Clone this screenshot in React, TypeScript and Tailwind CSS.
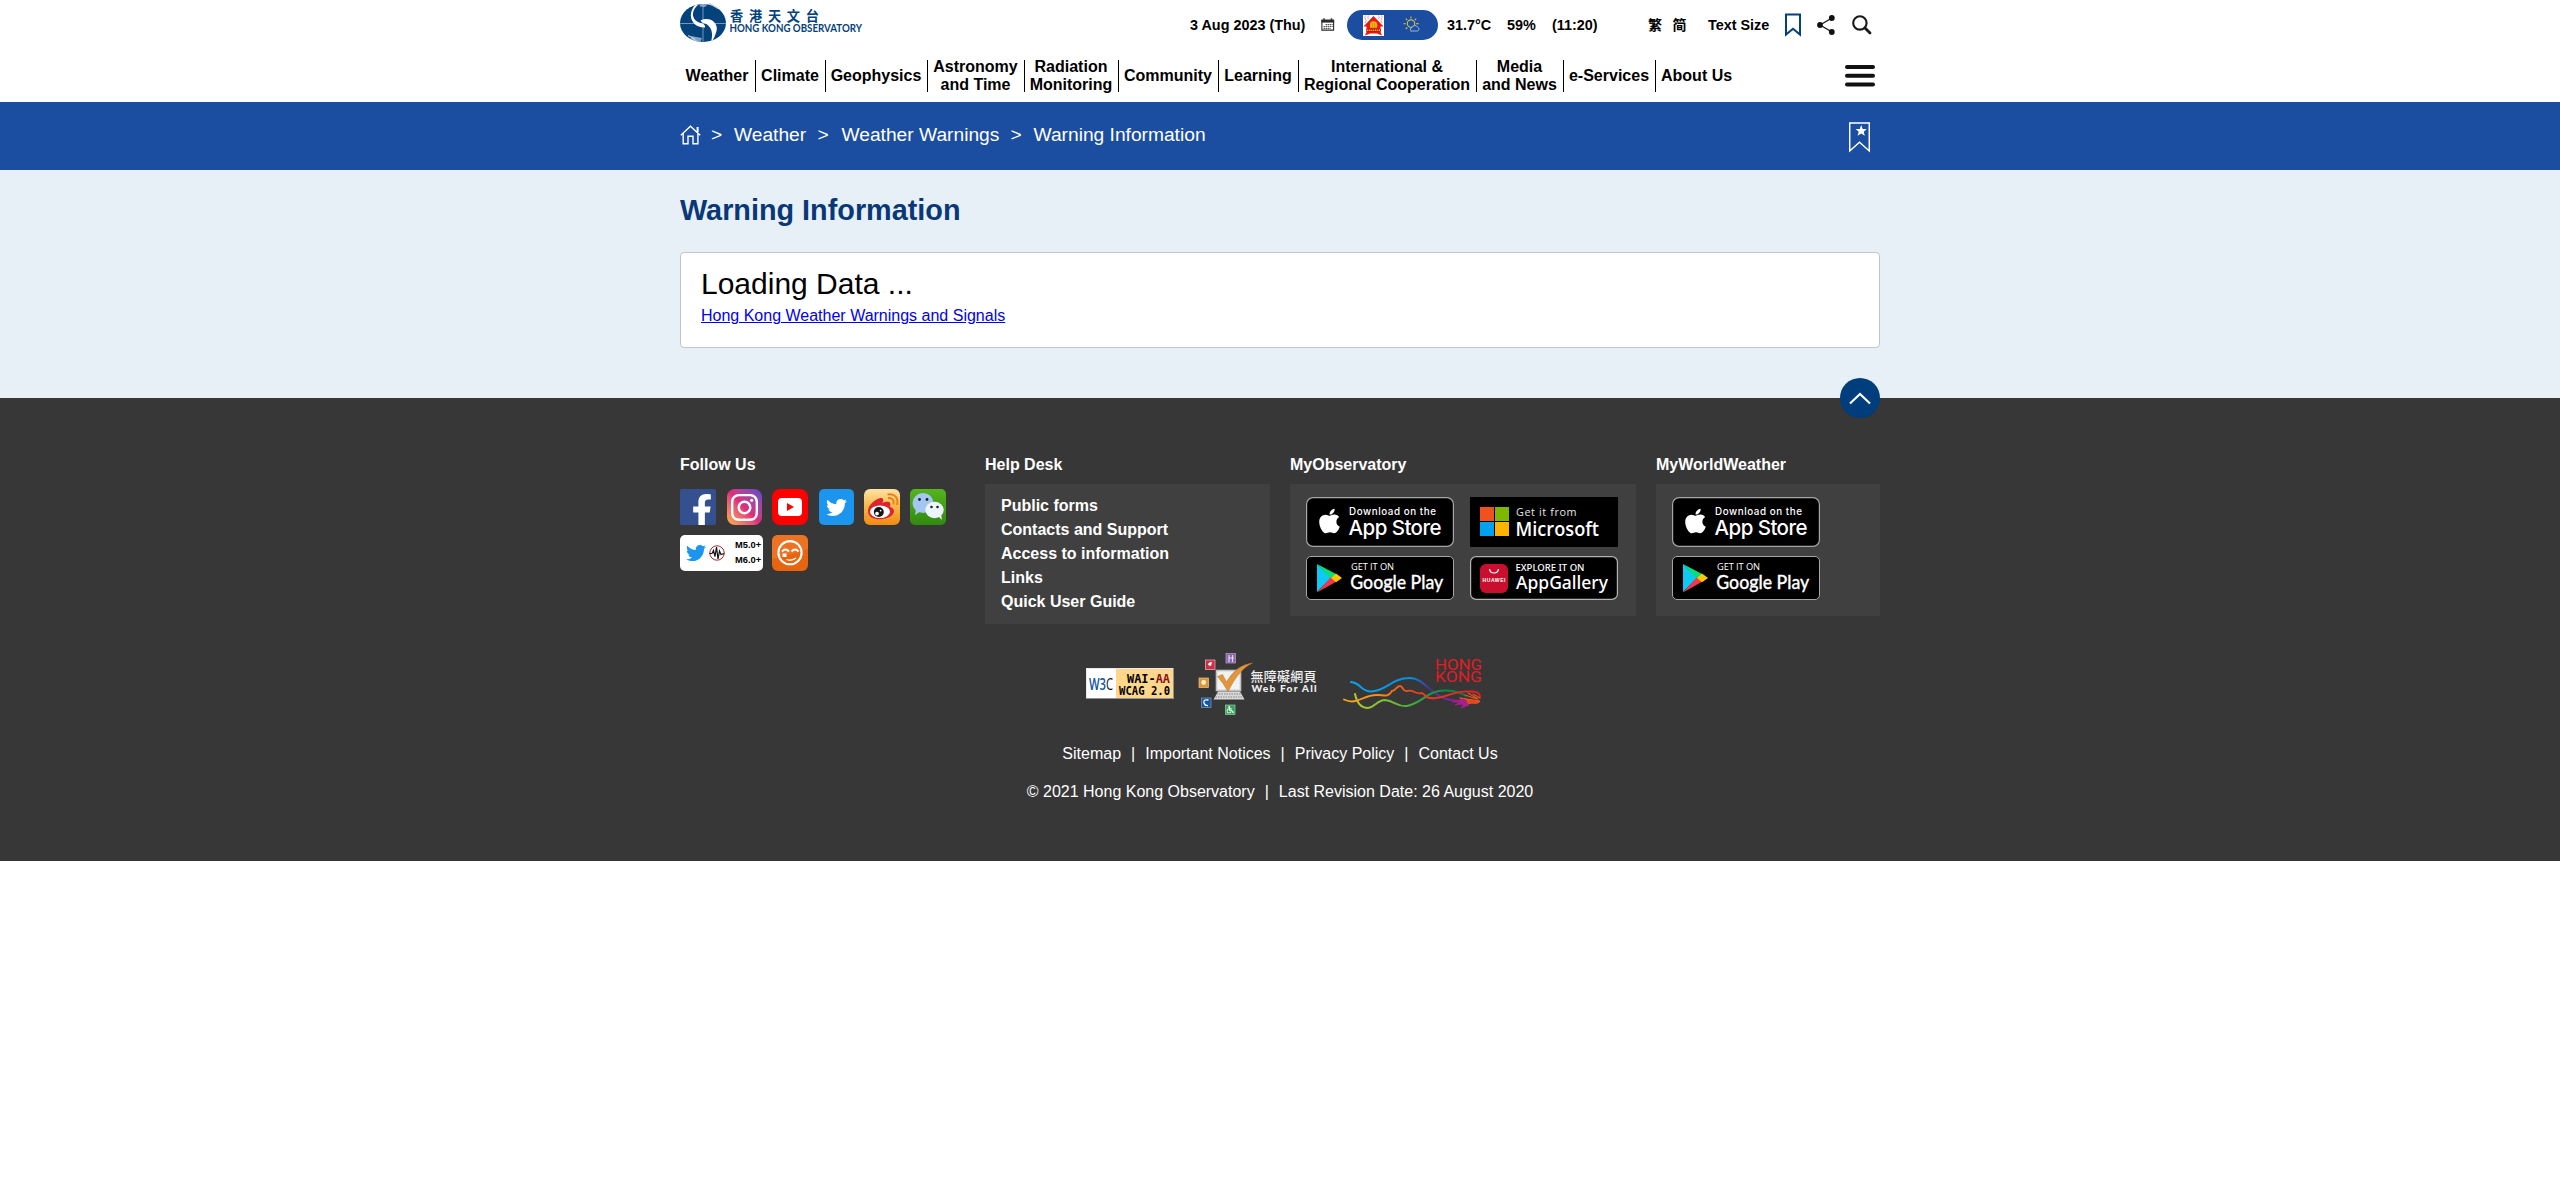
import React from "react";
import { FaFacebookF, FaInstagram, FaTwitter, FaApple, FaWheelchair } from "react-icons/fa";

const SANS = "Liberation Sans, Arial, sans-serif";
const CJK = "Noto Sans CJK TC, sans-serif";

function ObservatoryLogo() {
  return (
    <svg width="186" height="46" viewBox="0 0 186 46" className="block overflow-visible">
      <defs>
        <clipPath id="globe">
          <ellipse cx="23" cy="23" rx="23" ry="19" />
        </clipPath>
      </defs>
      <g clipPath="url(#globe)">
        <rect width="46" height="44" fill="#04427c" />
        <path d="M23 0V44M0 23.5H46" stroke="#7fa3c4" strokeWidth="0.9" />
        <path d="M11 4.500C12 3.500 15 4 19 4C10 11 11 21 22 23.500C24 24 25.500 25.500 25 27.500C12 28 5 14 17 3" fill="#fff" />
        <path d="M20.500 20.500C31 15.500 38.500 24 36.500 31C35 37 33 40 30.500 43C33.500 35 33 25 22 22.500Z" fill="#fff" />
        <path d="M19 3L29 3L25 7L20 6.500ZM11 36L22 38L20 43L10 42Z" fill="#b4c9dd" opacity="0.7" />
      </g>
      <path d="M29 3.500L35 6.500M32 5L38 8.500M12 38L18 42M8 35.500L15 39" stroke="#b4c9dd" strokeWidth="1.100" />
      <text x="50" y="21.200" textLength="89" fontFamily={CJK} fontWeight="700" fontSize="13.200" fill="#04427c">香港天文台</text>
      <text x="49.500" y="32.300" textLength="132.500" lengthAdjust="spacingAndGlyphs" fontFamily="Lato, sans-serif" fontWeight="700" fontSize="10.400" fill="#04427c">HONG KONG OBSERVATORY</text>
    </svg>
  );
}

function CalendarIcon() {
  return (
    <svg width="14" height="14" viewBox="0 0 14 14">
      <path d="M0.9 2.2H12.6V12.1H0.9Z" fill="#fff" stroke="#2b2b2b" strokeWidth="1.1" />
      <path d="M0.4 1.7H13.1V4.6H0.4Z" fill="#2b2b2b" />
      <path d="M3 0.3V2.6M10.5 0.3V2.6" stroke="#2b2b2b" strokeWidth="1.4" />
      <path d="M4.6 6.6H11.6M2.6 8.5H11.6M2.6 10.4H9.6" stroke="#444" strokeWidth="1.1" strokeDasharray="1.3 0.7" />
    </svg>
  );
}

function HotWarningIcon() {
  return (
    <svg width="21" height="21" viewBox="0 0 21 21">
      <rect width="21" height="21" fill="#fff" />
      <path d="M2.5 0.5Q1 2.5 2.5 4T2 8M5.5 0.5Q4 2.5 5.5 4M15.5 0.5Q17 2.5 15.5 4M18.5 0.5Q20 2.5 18.5 4T19 8" stroke="#f58f8f" strokeWidth="0.9" fill="none" />
      <path d="M10.5 1L20.5 11.5H17.5V17L19 20.5L14 18.5H7L2 20.5L3.5 17V11.5H0.5Z" fill="#f01414" />
      <path d="M7 12.8V9.2Q7.2 6.2 10.2 6.2Q14 6.2 14.2 9.4V12.8Z" fill="#f2b90c" />
      <path d="M9.3 8V12M11.6 8V12" stroke="#c9820c" strokeWidth="0.7" />
      <path d="M3.2 15.2H17.8" stroke="#a31010" strokeWidth="2.6" />
      <path d="M3.6 15.3H17.4" stroke="#f2b90c" strokeWidth="1.5" strokeDasharray="1.4 0.6" />
    </svg>
  );
}

function SunCloudIcon() {
  return (
    <svg width="18" height="18" viewBox="0 0 18 18" fill="none">
      <circle cx="8" cy="7.6" r="3.7" stroke="#d3bd52" strokeWidth="1.1" />
      <path d="M8 0.5V2.5M8 13.2V15.6M0.5 7.8H2.8M13.3 7.6H15.6M2.8 2.6L4.2 4M13.2 2.6L11.8 4M2.8 13L4.2 11.5" stroke="#d3bd52" strokeWidth="1.1" />
      <path d="M8.6 15H14.7A2 2 0 0 0 14.6 11.2A2.9 2.9 0 0 0 9.2 11.5A1.8 1.8 0 0 0 8.6 15Z" fill="#1b4ea0" stroke="#9cb5de" strokeWidth="1" />
    </svg>
  );
}

function TopBar() {
  return (
    <div className="flex h-[50px] items-center text-[14.4px] font-bold whitespace-nowrap text-black">
      <div className="h-[50px] w-[510px]"><ObservatoryLogo /></div>
      <span className="w-[131px] pt-0.5">3 Aug 2023 (Thu)</span>
      <span className="w-[26px]"><CalendarIcon /></span>
      <div className="mr-[9px] flex h-[30px] w-[91px] items-center rounded-full bg-[#1b4ea0] pl-4">
        <HotWarningIcon />
        <span className="ml-[19px]"><SunCloudIcon /></span>
      </div>
      <span className="w-[60px] pt-0.5">31.7°C</span>
      <span className="w-[45px] pt-0.5">59%</span>
      <span className="w-[96px] pt-0.5">(11:20)</span>
      <span className="w-[24.5px] pb-0.5 font-['Noto_Sans_CJK_TC',sans-serif] text-sm leading-5">繁</span>
      <span className="w-[35.5px] pb-0.5 font-['Noto_Sans_CJK_SC',sans-serif] text-sm leading-5">简</span>
      <span className="w-[77px] pt-0.5">Text Size</span>
      <svg className="mr-4" width="16" height="24" viewBox="0 0 16 24" fill="none">
        <path d="M1 1.5H15V21.6L8 15.8L1 21.6Z" stroke="#04427c" strokeWidth="2" />
      </svg>
      <svg className="mr-[17px]" width="18" height="20" viewBox="0 0 18 20">
        <path d="M15 3L3 10L15 17" stroke="#111" strokeWidth="1.2" fill="none" />
        <circle cx="14.8" cy="3" r="2.9" fill="#111" />
        <circle cx="3" cy="10" r="2.9" fill="#111" />
        <circle cx="14.8" cy="17" r="2.9" fill="#111" />
      </svg>
      <svg width="20" height="20" viewBox="0 0 20 20" fill="none" stroke="#1a1a1a">
        <circle cx="7.9" cy="7.9" r="6.7" strokeWidth="2.1" />
        <path d="M13 13L18 18" strokeWidth="2.8" strokeLinecap="round" />
      </svg>
    </div>
  );
}

const NAV: { lines: string[]; width: string }[] = [
  { lines: ["Weather"], width: "w-[76px]" },
  { lines: ["Climate"], width: "w-[70px]" },
  { lines: ["Geophysics"], width: "w-[102px]" },
  { lines: ["Astronomy", "and Time"], width: "w-[97px]" },
  { lines: ["Radiation", "Monitoring"], width: "w-[94px]" },
  { lines: ["Community"], width: "w-[100px]" },
  { lines: ["Learning"], width: "w-[80px]" },
  { lines: ["International &", "Regional Cooperation"], width: "w-[178px]" },
  { lines: ["Media", "and News"], width: "w-[87px]" },
  { lines: ["e-Services"], width: "w-[92px]" },
];

function NavBar() {
  return (
    <nav className="flex h-[52px] items-center text-base leading-[18px] font-bold whitespace-nowrap text-black">
      {NAV.map((item) => (
        <div key={item.lines[0]} className={`${item.width} flex h-8 flex-col items-center justify-center border-r border-black pr-px`}>
          {item.lines.map((l) => <span key={l}>{l}</span>)}
        </div>
      ))}
      <span className="pl-[5px]">About Us</span>
      <svg className="mr-[5px] ml-auto" width="30" height="22" viewBox="0 0 30 22">
        <path d="M2 2H28M2 10.7H28M2 19.4H28" stroke="#111" strokeWidth="4" strokeLinecap="round" />
      </svg>
    </nav>
  );
}

function Breadcrumb() {
  return (
    <div className="h-[68px] bg-[#1b4ea0] text-[19.2px] whitespace-nowrap text-white">
      <div className="mx-auto flex h-[67px] w-[1200px] items-center">
        <svg className="mr-[10px] mb-0.5" width="21" height="20" viewBox="0 0 21 20" fill="none" stroke="#fff" strokeWidth="1.4">
          <path d="M0.8 10.3L10.5 1.2L20.2 10.3M3.2 8.5V18.8H8V11.2H13V18.8H17.9V8.5" />
          <path d="M17.6 2V7" strokeWidth="2" />
        </svg>
        <span className="w-[23px]">&gt;</span>
        <span className="w-[83.500px]">Weather</span>
        <span className="w-[24px]">&gt;</span>
        <span className="w-[169px]">Weather Warnings</span>
        <span className="w-[23px]">&gt;</span>
        <span>Warning Information</span>
        <svg className="mt-1 mr-[10px] ml-auto" width="21" height="31" viewBox="0 0 21 31">
          <path d="M0.7 0.9H20.3V29L10.5 20.3L0.7 29Z" fill="none" stroke="#fff" strokeWidth="1.5" />
          <path d="M12.2 3L13.7 6.9L17.8 7.1L14.7 9.7L15.8 13.8L12.2 11.5L8.6 13.8L9.7 9.7L6.6 7.1L10.7 6.9Z" fill="#fff" />
        </svg>
      </div>
    </div>
  );
}

function FollowUs() {
  return (
    <div className="flex w-[285px] flex-wrap gap-y-[10px]">
      <div className="mr-[11px] size-9 overflow-hidden rounded-[2px] bg-[#35508f] pt-[5px] pl-[11px]">
        <FaFacebookF color="#fff" className="h-[33px] w-[22px]" />
      </div>
      <div className="mr-[10px] flex h-9 w-[35px] items-center justify-center rounded-lg bg-linear-to-tr from-[#fbb040] via-[#dd2a7b] to-[#5a41cf]">
        <FaInstagram size={31} color="#fff" />
      </div>
      <div className="mr-[11px] flex size-9 items-center justify-center rounded-lg bg-[#fe0000]">
        <svg width="24" height="18" viewBox="0 0 24 18">
          <rect width="24" height="18" rx="4" fill="#fff" />
          <path d="M9 5L16 9L9 13Z" fill="#fe0000" />
        </svg>
      </div>
      <div className="mr-[10px] flex h-9 w-[35px] items-center justify-center rounded-[5px] bg-[#1b95ee]">
        <FaTwitter size={21} color="#fff" />
      </div>
      <svg className="mr-[10px]" width="36" height="36" viewBox="0 0 36 36">
        <defs>
          <linearGradient id="wb" x1="0" y1="0" x2="0" y2="1">
            <stop offset="0" stopColor="#fde3a6" />
            <stop offset="0.5" stopColor="#f9b645" />
            <stop offset="1" stopColor="#f28a14" />
          </linearGradient>
        </defs>
        <rect width="36" height="36" rx="6" fill="url(#wb)" />
        <path d="M4 22C4 15 14 8 18 9C20 10 19 13 18.5 14C21 13 25 12 26 14C27 15.5 26 17 26 18C30 19 31 22 29 25C26 31 4 34 4 22Z" fill="#dc2430" />
        <ellipse cx="16" cy="22.8" rx="10" ry="6.3" fill="#fff" />
        <circle cx="14.8" cy="23" r="5" fill="#161616" />
        <circle cx="13" cy="24.6" r="1.9" fill="#fff" />
        <circle cx="16.6" cy="21.6" r="0.9" fill="#fff" />
        <path d="M24 9C28 8.5 30.5 11 29.5 15.5M23.5 5.5C30.5 4 35 9 33 16" stroke="#ef7d17" strokeWidth="2" fill="none" />
      </svg>
      <div className="flex size-9 items-center justify-center rounded-[5px] bg-linear-to-b from-[#55b41f] to-[#31890f]">
        <svg width="34" height="32" viewBox="0 0 34 32">
          <path d="M5 18L4 24L10 20Z" fill="#a4c7f2" />
          <ellipse cx="12" cy="12" rx="10.5" ry="10" fill="#a4c7f2" />
          <ellipse cx="23.5" cy="19" rx="9.2" ry="8.2" fill="#eef4fb" />
          <path d="M27 25L31 29L30 23Z" fill="#eef4fb" />
          <circle cx="8.5" cy="8.5" r="1.4" fill="#222" />
          <circle cx="16" cy="8.5" r="1.4" fill="#222" />
          <circle cx="20.5" cy="16" r="1.3" fill="#222" />
          <circle cx="26.5" cy="16" r="1.3" fill="#222" />
        </svg>
      </div>
      <div className="mr-[9px] flex h-9 w-[83px] items-center rounded-[5px] bg-white pl-[6px]">
        <FaTwitter size={20} color="#1b95ee" />
        <svg className="mb-px ml-[3px]" width="16" height="16" viewBox="0 0 16 16" fill="none">
          <circle cx="8" cy="8" r="7.2" stroke="#a02a2a" strokeWidth="1" />
          <path d="M0.5 8.5H3L4.5 5.5L6 11.5L7.5 2L9 14L10.5 6L12 9.5L15.5 8.5" stroke="#111" strokeWidth="1.2" />
        </svg>
        <div className="ml-[10px] text-[9.3px] leading-[15px] font-bold text-black">
          <div>M5.0+</div>
          <div>M6.0+</div>
        </div>
      </div>
      <svg width="36" height="36" viewBox="0 0 36 36">
        <rect width="36" height="36" rx="6" fill="#e8650f" />
        <path d="M0 6A6 6 0 0 1 6 0H30A6 6 0 0 1 36 6V14Q18 20 0 24Z" fill="#ec7323" />
        <circle cx="18" cy="17.7" r="11.6" stroke="#fff" strokeWidth="2.1" fill="none" />
        <path d="M10 16.5Q13.5 12.5 17 16.5M19.5 16.5Q23 12.5 26.5 16.5" stroke="#fff" strokeWidth="1.9" fill="none" />
        <rect x="10.5" y="18.5" width="4" height="3.500" fill="#fff" />
        <path d="M14.500 24.500Q19 26.500 24 23" stroke="#fff" strokeWidth="1.300" fill="none" />
      </svg>
    </div>
  );
}

function AppStoreBadge() {
  return (
    <svg width="148" height="50" viewBox="0 0 148 50" className="block">
      <rect x="0.6" y="0.6" width="146.800" height="48.800" rx="6.500" fill="#000" stroke="#a6a6a6" strokeWidth="1.200" />
      <FaApple x="9.500" y="10" size={28} color="#fff" />
      <text x="43" y="18" textLength="87" fontFamily="Inter, sans-serif" fontWeight="500" fontSize="9.800" fill="#fff">Download on the</text>
      <text x="42.500" y="37.500" textLength="93" fontFamily="Inter, sans-serif" fontWeight="500" fontSize="20.500" fill="#fff">App Store</text>
    </svg>
  );
}

function GooglePlayBadge() {
  return (
    <svg width="148" height="44" viewBox="0 0 148 44" className="block">
      <rect x="0.5" y="0.5" width="147" height="43" rx="4.500" fill="#000" stroke="#a6a6a6" />
      <path d="M11 8V36L25 22Z" fill="#0cc9f5" />
      <path d="M11 8L30.500 18.200L25 23Z" fill="#05e07a" />
      <path d="M11 36.500L30.500 25.500L25 21Z" fill="#f5364c" />
      <path d="M30 17.500L36 22L30 26.200L25 22Z" fill="#ffc800" />
      <text x="45" y="14.200" textLength="43" fontFamily="Open Sans, sans-serif" fontWeight="500" fontSize="9.300" fill="#fff">GET IT ON</text>
      <text x="44.300" y="32.600" textLength="93" lengthAdjust="spacingAndGlyphs" fontFamily="Lato, sans-serif" fontWeight="500" fontSize="20" fill="#fff" stroke="#fff" strokeWidth="0.3">Google Play</text>
    </svg>
  );
}

function MicrosoftBadge() {
  return (
    <svg width="148" height="50" viewBox="0 0 148 50" className="block">
      <rect width="148" height="50" fill="#000" />
      <rect x="10" y="10" width="14" height="14" fill="#f1501f" />
      <rect x="25" y="10" width="14" height="14" fill="#7db700" />
      <rect x="10" y="25" width="14" height="14" fill="#00a1ef" />
      <rect x="25" y="25" width="14" height="14" fill="#ffb300" />
      <text x="46" y="18.600" textLength="60.500" fontFamily="Open Sans, sans-serif" fontSize="10.800" fill="#e4e4e4">Get it from</text>
      <text x="45.500" y="39.200" textLength="83.500" lengthAdjust="spacingAndGlyphs" fontFamily="Open Sans, sans-serif" fontWeight="600" fontSize="20.500" fill="#fff">Microsoft</text>
    </svg>
  );
}

function AppGalleryBadge() {
  return (
    <svg width="148" height="44" viewBox="0 0 148 44" className="block">
      <rect x="0.6" y="0.6" width="146.800" height="42.800" rx="5.500" fill="#000" stroke="#b4b4b4" strokeWidth="1.200" />
      <rect x="10" y="8" width="28" height="29" rx="6" fill="#c8102e" />
      <path d="M19.500 13Q20 17 24 17T28.500 13" stroke="#fff" strokeWidth="1.200" fill="none" />
      <text x="12.500" y="26" textLength="23" fontFamily={SANS} fontWeight="700" fontSize="5" fill="#fff">HUAWEI</text>
      <text x="45.500" y="14.800" textLength="69" lengthAdjust="spacingAndGlyphs" fontFamily="Noto Sans, sans-serif" fontWeight="500" fontSize="9.300" fill="#fff">EXPLORE IT ON</text>
      <text x="46" y="33.200" textLength="92" lengthAdjust="spacingAndGlyphs" fontFamily="Noto Sans, sans-serif" fontWeight="500" fontSize="18.500" fill="#fff">AppGallery</text>
    </svg>
  );
}

function W3cBadge() {
  return (
    <svg width="88" height="31" viewBox="0 0 88 31" className="overflow-visible">
      <rect width="88" height="31" fill="#ffd78c" />
      <rect width="30" height="31" fill="#fff" />
      <path d="M0.5 31V0.5H88" stroke="#e8e8e8" fill="none" />
      <path d="M0 30.5H87.500V0" stroke="#8f8f8f" fill="none" />
      <text x="3" y="22" textLength="24" lengthAdjust="spacingAndGlyphs" fontFamily="Open Sans, sans-serif" fontWeight="600" fontSize="17" fill="#0b55a0">W3<tspan fontWeight="400" fill="#111">C</tspan></text>
      <text x="41" y="14.600" textLength="43" lengthAdjust="spacingAndGlyphs" fontFamily="DejaVu Sans Mono, monospace" fontWeight="700" fontSize="12" fill="#000">WAI-<tspan fill="#84151c">AA</tspan></text>
      <text x="33" y="26.600" textLength="51" lengthAdjust="spacingAndGlyphs" fontFamily="DejaVu Sans Mono, monospace" fontWeight="700" fontSize="12" fill="#000">WCAG 2.0</text>
    </svg>
  );
}

function WebForAllLogo() {
  return (
    <svg width="119" height="62" viewBox="0 0 119 62" className="overflow-visible">
      <rect x="28" y="0.5" width="9.500" height="9.500" fill="#8a63ad" stroke="#b9a3cf" strokeWidth="0.700" />
      <path d="M31 2V9M34.500 2V9M31 5H36" stroke="#e5daf0" strokeWidth="1.200" />
      <rect x="7.500" y="7" width="9.500" height="9.500" fill="#cf2f45" stroke="#eeb8bd" strokeWidth="0.700" />
      <path d="M10 12Q10 9 14 9L13 13Z" fill="#fff" />
      <rect x="1" y="25" width="9.500" height="9.500" fill="#dd9437" stroke="#efc48d" strokeWidth="0.700" />
      <circle cx="5.700" cy="29.500" r="2.400" fill="#fff0cd" />
      <rect x="3.500" y="45" width="9.500" height="9.500" fill="#1656a0" stroke="#7ea0cc" strokeWidth="0.700" />
      <path d="M10.500 47Q5 46 6 50Q7 53 10 52.500" stroke="#fff" fill="none" strokeWidth="1.300" />
      <rect x="27.500" y="52" width="9.500" height="9.500" fill="#33a357" stroke="#96d1a8" strokeWidth="0.700" />
      <FaWheelchair x="28.500" y="53" size={7.5} color="#fff" />
      <rect x="18.500" y="17.500" width="24" height="20" fill="#f2f2f2" stroke="#c2c2c2" strokeWidth="1.600" />
      <path d="M20 38.500H42L46.500 46.500H15.500Z" fill="#d9d9d9" />
      <path d="M18.500 41H43.500M17.500 44H45" stroke="#777" strokeWidth="0.900" strokeDasharray="1.500 1" />
      <path d="M19.500 23.500L24.500 21.500L28.500 29Q38 12 54.500 10Q41 16 30 38.500Q26 31 19.500 23.500Z" fill="#e2963c" stroke="#b8702a" strokeWidth="0.500" />
      <text x="52.500" y="28" textLength="66" fontFamily={CJK} fontWeight="500" fontSize="13" fill="#f0f0f0">無障礙網頁</text>
      <text x="53.500" y="38.700" textLength="65" fontFamily="Lato, sans-serif" fontWeight="900" fontSize="10.200" fill="#f0f0f0">Web For All</text>
    </svg>
  );
}

function BrandHongKongLogo() {
  return (
    <svg width="140" height="54" viewBox="0 0 140 54" fill="none" strokeLinecap="round" className="overflow-visible">
      <defs>
        <linearGradient id="blueRibbon"><stop offset="0" stopColor="#08a5ec" /><stop offset="0.55" stopColor="#078fe0" /><stop offset="0.72" stopColor="#463393" /><stop offset="1" stopColor="#a1188d" /></linearGradient>
        <linearGradient id="greenRibbon"><stop offset="0" stopColor="#b0cc2c" /><stop offset="0.35" stopColor="#6cbb35" /><stop offset="0.7" stopColor="#16974a" /><stop offset="1" stopColor="#087a42" /></linearGradient>
        <linearGradient id="redRibbon"><stop offset="0" stopColor="#f7a81b" /><stop offset="0.28" stopColor="#f28a1b" /><stop offset="0.5" stopColor="#ea4422" /><stop offset="1" stopColor="#e31b23" /></linearGradient>
      </defs>
      <path d="M8 24C18 25 18 33.500 28 33.500C44 33 48 20 67 20C84 20 88 43 117 43" stroke="url(#blueRibbon)" strokeWidth="2" />
      <path d="M12 36Q15 50 25 50C33 49 34 42 42 42C52 43 54 49 64 48C80 45 84 32 103 32.500Q116 33 123 38" stroke="url(#greenRibbon)" strokeWidth="2" />
      <path d="M1 41.500C15 48 20 36 35 37C44 38 46 38 49 33C53 33 53 28 57 28C60 28 60 34 64 33C71 31 72 37 79 35C84 38 82 41 93 40C108 38 112 32 127 33.500Q137 33 137 39" stroke="url(#redRibbon)" strokeWidth="1.900" />
      <path d="M117 40L137 43Q136 46 129 45L120 46L126 43Z" fill="#ea4020" stroke="#f05a1e" strokeWidth="1" />
      <path d="M122 37L134 41M125 35L135 41M130 36L137 40" stroke="#f1531d" strokeWidth="1.100" />
      <path d="M110 44L121 41L126 47L118 50L121 46L112 47L117 44Z" fill="#a8208e" stroke="#a8208e" strokeWidth="0.800" />
      <text x="92" y="11.500" textLength="47" lengthAdjust="spacingAndGlyphs" fontFamily="Roboto, sans-serif" fontSize="14" fill="#e31b23">HONG</text>
      <text x="92" y="23.500" textLength="47" lengthAdjust="spacingAndGlyphs" fontFamily="Roboto, sans-serif" fontSize="14" fill="#e31b23">KONG</text>
    </svg>
  );
}

function Heading({ children }: { children: React.ReactNode }) {
  return <h2 className="mb-[9px] h-5 text-base leading-5 font-bold">{children}</h2>;
}

function Footer() {
  return (
    <footer className="h-[463px] bg-[#373737] text-base text-white">
      <div className="relative mx-auto w-[1200px]">
        <button className="absolute -top-5 right-0 flex size-10 items-center justify-center rounded-full bg-[#003d7c]">
          <svg width="22" height="13" viewBox="0 0 22 13" fill="none">
            <path d="M1 11.500L11 2L21 11.500" stroke="#fff" strokeWidth="2.200" />
          </svg>
        </button>
        <div className="flex h-[226px] items-start pt-[57px]">
          <section className="w-[305px]">
            <Heading>Follow Us</Heading>
            <div className="mt-[14px]"><FollowUs /></div>
          </section>
          <section className="mr-5 w-[285px]">
            <Heading>Help Desk</Heading>
            <ul className="h-[140px] bg-[#404040] py-[10px] pl-4 leading-6 font-bold">
              <li>Public forms</li>
              <li>Contacts and Support</li>
              <li>Access to information</li>
              <li>Links</li>
              <li>Quick User Guide</li>
            </ul>
          </section>
          <section className="mr-5 w-[346px]">
            <Heading>MyObservatory</Heading>
            <div className="grid h-[132px] grid-cols-[148px_148px] content-start gap-x-4 gap-y-[9px] bg-[#404040] pt-[13px] pl-4">
              <AppStoreBadge />
              <MicrosoftBadge />
              <GooglePlayBadge />
              <AppGalleryBadge />
            </div>
          </section>
          <section className="w-[224px]">
            <Heading>MyWorldWeather</Heading>
            <div className="flex h-[132px] flex-col gap-[9px] bg-[#404040] pt-[13px] pl-4">
              <AppStoreBadge />
              <GooglePlayBadge />
            </div>
          </section>
        </div>
        <div className="flex h-[120px] items-center pl-[406px]">
          <span className="mb-px"><W3cBadge /></span>
          <span className="ml-6"><WebForAllLogo /></span>
          <span className="ml-[26px] pt-px"><BrandHongKongLogo /></span>
        </div>
        <div className="-mt-0.5 flex justify-center gap-[10px] leading-6 whitespace-nowrap">
          <span>Sitemap</span><span>|</span><span>Important Notices</span><span>|</span><span>Privacy Policy</span><span>|</span><span>Contact Us</span>
        </div>
        <div className="mt-[14px] flex justify-center gap-[10px] leading-6 whitespace-nowrap">
          <span>© 2021 Hong Kong Observatory</span><span>|</span><span>Last Revision Date: 26 August 2020</span>
        </div>
      </div>
    </footer>
  );
}

export default function App() {
  return (
    <div className="min-h-[1193px] bg-white font-['Liberation_Sans',Arial,sans-serif]">
      <header className="mx-auto h-[102px] w-[1200px]">
        <TopBar />
        <NavBar />
      </header>
      <Breadcrumb />
      <main className="h-[228px] bg-[#e7f0f6]">
        <div className="mx-auto w-[1200px] pt-[22px]">
          <h1 className="h-[60px] text-[28.8px] leading-9 font-bold text-[#0a3877]">Warning Information</h1>
          <div className="h-[96px] rounded border border-[#c4c4c4] bg-white pt-[13px] pl-5">
            <div className="text-[30px] leading-9 text-black">Loading Data ...</div>
            <a className="mt-0.5 block text-base leading-6 text-[#0000ee] underline">Hong Kong Weather Warnings and Signals</a>
          </div>
        </div>
      </main>
      <Footer />
    </div>
  );
}
